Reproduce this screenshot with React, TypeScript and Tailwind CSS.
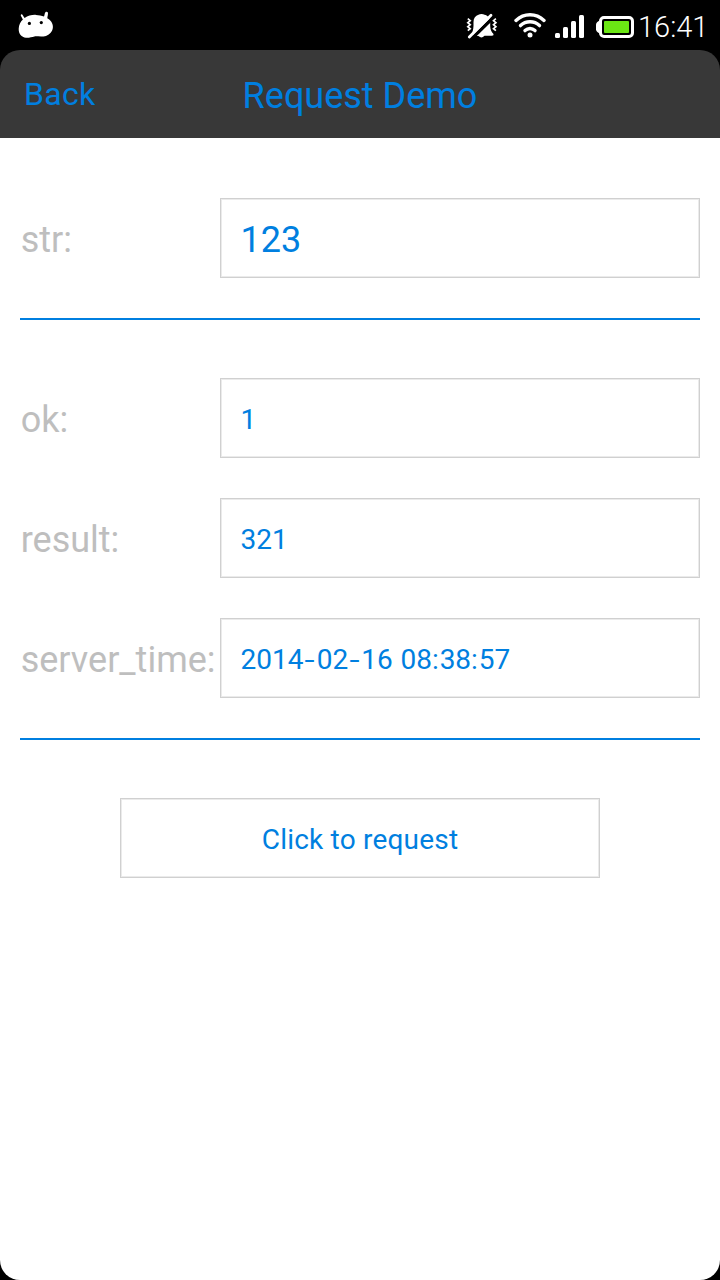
import React from 'react';

function AndroidIcon() {
  return (
    <svg className="block" width="36" height="28" viewBox="0 0 36 28">
      <path
        d="M3.3 3.2C4.6 3 5.2 5.2 6.6 7C10 4.6 14 3.7 18 3.9C20.800 4 23.600 4.500 26 5.500C27 3.500 26.500 0.800 28.600 0.800C30.800 0.900 29.900 3.600 29.300 7.200C32.500 9 35 12 34.900 16C34.800 20 32 23.500 28 24.900C24 26.200 20 25.200 16.500 25.400C13.500 26 11.500 26.900 8 26.700C3.500 26.300 0.500 22.600 0.700 17.700C0.800 14 2.500 10.700 4.900 8.500C3.900 6 1.800 4.200 3.300 3.200Z"
        fill="#fff"
      />
      <circle cx="11.400" cy="12.400" r="1.600" fill="#000" />
      <circle cx="23.300" cy="11.600" r="1.600" fill="#000" />
    </svg>
  );
}

function SilentIcon() {
  return (
    <svg className="block" width="32" height="28" viewBox="0 0 32 28">
      <path
        d="M6.500 21.500C6 20 7.400 18 7.500 14V10C7.500 6 9.500 3.700 12.500 2.800C14 1.600 17 1.600 18.500 2.800C21.500 3.500 24 6 24.200 9V14C24.400 18 25.500 20 27.500 22Q28 23.800 26 23.800H18.500Q15.500 27 12.500 24H8Z"
        fill="#fff"
      />
      <path d="M4.300 28L29 3.800" stroke="#000" strokeWidth="3.400" />
      <path d="M3.300 25L25 3.200" stroke="#fff" strokeWidth="2.800" strokeLinecap="round" />
      <path
        d="M1.800 6.700l2.400 2-2.400 2 2.400 2-2.400 2 2.400 2-2.400 2M29.900 6.700l-2.400 2 2.400 2-2.400 2 2.400 2-2.400 2 2.400 2"
        fill="none"
        stroke="#fff"
        strokeWidth="1.700"
      />
    </svg>
  );
}

function WifiIcon() {
  return (
    <svg className="block" width="32" height="26" viewBox="0 0 32 26">
      <g fill="none" stroke="#fff" strokeWidth="3.400" strokeLinecap="round">
        <path d="M2 7.400Q8 1.800 16 1.800T30 7.400" />
        <path d="M6.500 12.600Q10.500 8.800 16 8.800T25.500 12.600" />
        <path d="M11 17.600Q13.300 15.500 16 15.500T21 17.600" />
      </g>
      <circle cx="16" cy="22" r="2.500" fill="#fff" />
    </svg>
  );
}

function SignalIcon() {
  return (
    <svg className="block" width="30" height="24" viewBox="0 0 30 24" fill="#fff">
      <rect x="0" y="18" width="5" height="5" rx="1.500" />
      <rect x="8" y="12" width="5" height="11" rx="1.500" />
      <rect x="16" y="6" width="5" height="17" rx="1.500" />
      <rect x="24" y="0" width="5" height="23" rx="1.500" />
    </svg>
  );
}

function BatteryIcon() {
  return (
    <svg className="block" width="38" height="22" viewBox="0 0 38 22">
      <path d="M4 4.500C1.500 5.500 0 7 0 8.500V13.500C0 15 1.500 16.500 4 17.500Z" fill="#fff" />
      <rect x="4.500" y="1.500" width="32" height="19" rx="3.500" fill="#000" stroke="#fff" strokeWidth="3" />
      <rect x="8" y="5" width="25" height="12" rx="1" fill="#6be614" />
    </svg>
  );
}

function StatusBar() {
  return (
    <div className="flex h-[50px] items-start text-white">
      <div className="ml-[18px] mt-[11px]"><AndroidIcon /></div>
      <div className="ml-auto mt-[12px]"><SilentIcon /></div>
      <div className="ml-[16px] mt-[13px]"><WifiIcon /></div>
      <div className="ml-[9px] mt-[15px]"><SignalIcon /></div>
      <div className="ml-[11px] mt-[16px]"><BatteryIcon /></div>
      <div className="ml-[4px] mt-[7px] w-[82px] whitespace-nowrap text-[29px] font-light leading-[40px]">16:41</div>
    </div>
  );
}

const box = 'flex h-20 items-center border border-[#d0d0d0] text-[#007fe0] shadow-[inset_0_0_0_1px_#ebebeb]';

// Dashes and colons are set a little wider than the digits around them.
function Value({ text }: { text: string }) {
  return (
    <span className="whitespace-pre">
      {text.split(/([-: ])/).map((part, i) => {
        if (part === '-')
          return <span key={i} className="inline-block w-[13.200px] scale-x-130 text-center">-</span>;
        if (part === ':' || part === ' ')
          return <span key={i} className="tracking-[0.800px]">{part}</span>;
        return part;
      })}
    </span>
  );
}

function Field({ label, value, large = false }: { label: string; value: string; large?: boolean }) {
  return (
    <div className="flex h-20">
      <div className="flex w-[200px] shrink-0 items-center whitespace-nowrap pl-[0.700px] pt-1 text-[36px] leading-[42px] text-[#bebebe]">
        {label}
      </div>
      <div className={`${box} grow pl-[19.500px] pt-[3px] ${large ? 'text-[36px]' : 'text-[28px]'}`}>
        <Value text={value} />
      </div>
    </div>
  );
}

export default function App() {
  return (
    <div className="flex h-[1280px] w-[720px] flex-col overflow-hidden bg-black font-[Roboto,sans-serif]">
      <StatusBar />
      <header className="grid h-[88px] shrink-0 grid-cols-[1fr_auto_1fr] items-center rounded-t-[20px] bg-[#383838] text-[#007fe0]">
        <button className="justify-self-start pl-6 text-[32px] leading-[40px] tracking-[0.300px]">Back</button>
        <h1 className="pt-1 text-[36px] leading-[42px]">Request Demo</h1>
      </header>
      <main className="grow rounded-b-[20px] bg-white px-5 pt-[60px]">
        <Field label="str:" value="123" large />
        <div className="mt-10 h-[2px] bg-[#007fe0]" />
        <div className="mt-[58px] flex flex-col gap-10">
          <Field label="ok:" value="1" />
          <Field label="result:" value="321" />
          <Field label="server_time:" value="2014-02-16 08:38:57" />
        </div>
        <div className="mt-10 h-[2px] bg-[#007fe0]" />
        <button className={`${box} mx-auto mt-[58px] w-[480px] justify-center pt-[3px] text-[28px] tracking-[0.200px]`}>
          Click to request
        </button>
      </main>
    </div>
  );
}
